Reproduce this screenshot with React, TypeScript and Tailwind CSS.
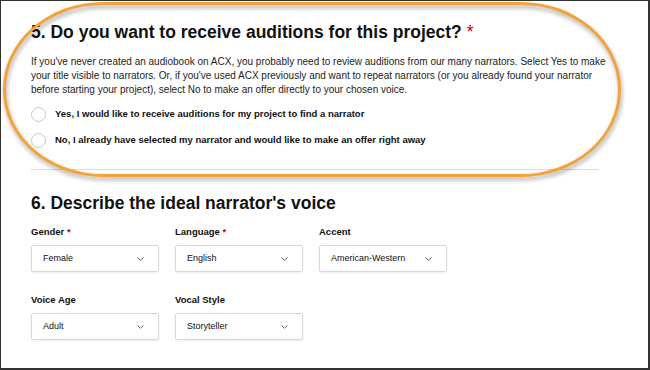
import React from 'react'

interface Field {
  label: string
  value: string
  required?: boolean
}

const fields: Field[] = [
  { label: 'Gender', value: 'Female', required: true },
  { label: 'Language', value: 'English', required: true },
  { label: 'Accent', value: 'American-Western' },
  { label: 'Voice Age', value: 'Adult' },
  { label: 'Vocal Style', value: 'Storyteller' },
]

const options = [
  'Yes, I would like to receive auditions for my project to find a narrator',
  'No, I already have selected my narrator and would like to make an offer right away',
]

function Chevron() {
  return (
    <svg width="7" height="4" viewBox="0 0 7 4" fill="none" className="shrink-0">
      <path d="M0.8 0.8l2.7 2.4 2.7-2.4" stroke="#666" strokeWidth="1" strokeLinecap="round" strokeLinejoin="round" />
    </svg>
  )
}

function SelectBox({ field }: { field: Field }) {
  return (
    <div className="flex flex-col">
      <div className="text-[9.5px] leading-[14px] font-bold text-[#111]">
        {field.label}
        {field.required && <span className="text-[#c40000]"> *</span>}
      </div>
      <div className="mt-[6px] flex h-[27px] items-center justify-between rounded-[2px] border border-[#d8d8d8] bg-white pl-[11px] pr-[14px] shadow-[0_1px_2px_rgba(0,0,0,0.08)]">
        <span className="text-[9px] text-[#111]">{field.value}</span>
        <Chevron />
      </div>
    </div>
  )
}

export default function App() {
  return (
    <div className="relative h-[370px] w-[650px] overflow-hidden border-t border-l border-r-2 border-b-2 border-[#333] bg-white font-['Liberation_Sans',Arial,sans-serif]">
      <div className="pl-[30px] pt-[20px]">
        <h2 className="text-[17.5px] leading-[22px] font-bold text-[#111]">
          5. Do you want to receive auditions for this project? <span className="font-normal text-[#c40000]">*</span>
        </h2>
        <p className="mt-[12px] w-[584px] text-[10px] leading-[14px] text-[#222]">
          If you've never created an audiobook on ACX, you probably need to review auditions from our many narrators. Select Yes to make your title visible to narrators. Or, if you've used ACX previously and want to repeat narrators (or you already found your narrator before starting your project), select No to make an offer directly to your chosen voice.
        </p>

        <div className="mt-[9px] flex flex-col gap-[10px]">
          {options.map((opt) => (
            <label key={opt} className="flex h-[16px] items-center gap-[9px]">
              <span className="h-[15px] w-[15px] rounded-full border border-[#c8c8c8] bg-white" />
              <span className="text-[9.5px] font-bold text-[#111]">{opt}</span>
            </label>
          ))}
        </div>

        <div className="mt-[21px] h-px w-[568px] bg-[#dcdcdc]" />

        <h2 className="mt-[22px] text-[17.5px] leading-[22px] font-bold text-[#111]">
          6. Describe the ideal narrator's voice
        </h2>

        <div className="mt-[11px] grid grid-cols-[128px_128px_128px] gap-x-[16px] gap-y-[21px]">
          {fields.map((f) => (
            <SelectBox key={f.label} field={f} />
          ))}
        </div>
      </div>

      {/* annotation highlight */}
      <div className="pointer-events-none absolute left-[2px] top-[1px] h-[175px] w-[618px] rounded-[100px/87px] border-[3px] border-[#f2a33a] drop-shadow-[1px_3px_2px_rgba(0,0,0,0.35)]" />
    </div>
  )
}
